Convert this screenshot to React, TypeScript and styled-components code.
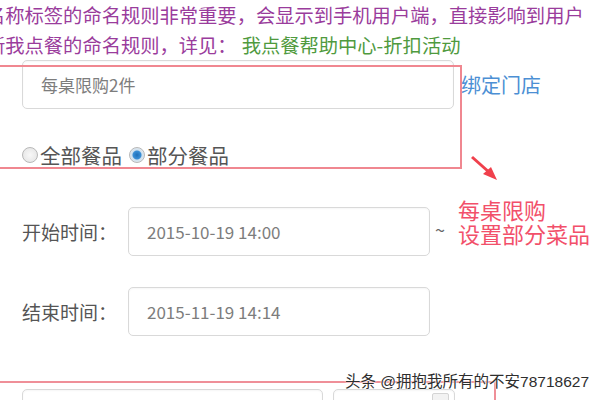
import React from 'react';
import styled, { createGlobalStyle } from 'styled-components';

const GlobalStyle = createGlobalStyle`
    html, body {
        margin: 0;
        padding: 0;
        background: #ffffff;
    }
    body {
        font-family: 'Noto Sans CJK SC', 'Noto Sans', sans-serif;
    }
`;

const Page = styled.div`
    position: relative;
    width: 600px;
    height: 400px;
    overflow: hidden;
    background: #fff;
`;

const Notice = styled.div`
    margin-left: -14px;
    font-size: 19.3px;
    line-height: 30px;
    color: #9a3c9c;
    white-space: nowrap;
`;

const HelpLink = styled.span`
    color: #4f9a3e;
    margin-left: 5px;
`;

const Row = styled.div<{ $top: number }>`
    display: flex;
    align-items: center;
    padding-left: 22px;
    margin-top: ${(p) => p.$top}px;
`;

const Field = styled.div<{ $width: number; $gap?: number }>`
    box-sizing: border-box;
    width: ${(p) => p.$width}px;
    height: 49px;
    margin-left: ${(p) => p.$gap ?? 0}px;
    padding-left: 18px;
    display: flex;
    align-items: center;
    border: 1px solid #d9d9d9;
    border-radius: 5px;
    box-shadow: inset 0 1px 2px rgba(0, 0, 0, 0.04);
    font-size: 17px;
    color: #7d7d7d;
    flex-shrink: 0;
`;

const SideLink = styled.span`
    margin-left: 7px;
    font-size: 20px;
    color: #4c8fd4;
`;

const Label = styled.span`
    width: 106px;
    font-size: 19px;
    color: #555;
`;

const Tilde = styled.span`
    margin-left: 5px;
    margin-top: -6px;
    font-size: 18px;
    color: #666;
`;

const RadioRow = styled.div`
    display: flex;
    align-items: center;
    height: 30px;
    margin-top: 31px;
    padding-left: 22px;
`;

const Radio = styled.span<{ $checked?: boolean }>`
    box-sizing: border-box;
    width: 16px;
    height: 16px;
    border-radius: 50%;
    border: 1px solid #b8b8b8;
    background: ${(p) =>
        p.$checked
            ? 'radial-gradient(circle, #1f6fb8 0, #3a8fd6 4px, #cfe0ee 5px, #f4f4f4 100%)'
            : 'radial-gradient(circle, #f8f8f8 0, #e2e2e2 100%)'};
    flex-shrink: 0;
`;

const RadioLabel = styled.span`
    margin-left: 2px;
    margin-right: 7px;
    font-size: 20.5px;
    color: #555;
`;

const SmallButton = styled.span`
    margin-left: auto;
    margin-right: 5px;
    width: 15px;
    height: 20px;
    align-self: flex-start;
    margin-top: 3px;
    border: 1px solid #d4d4d4;
    border-radius: 2px;
    background: #f2f2f2;
`;

// annotation layer drawn over the screenshot
const HighlightBox = styled.div`
    position: absolute;
    left: -10px;
    top: 65px;
    width: 472px;
    height: 104px;
    box-sizing: border-box;
    border: 2px solid #f08790;
    pointer-events: none;
`;

const BottomBox = styled.div`
    position: absolute;
    left: -10px;
    top: 381px;
    width: 506px;
    height: 40px;
    box-sizing: border-box;
    border-top: 2px solid #ef8f98;
    border-right: 2px solid #ef8f98;
`;

const Callout = styled.div`
    position: absolute;
    left: 458px;
    top: 197px;
    font-size: 22px;
    line-height: 24px;
    color: #f2506a;
    white-space: nowrap;
`;

const Arrow = styled.svg`
    position: absolute;
    left: 468px;
    top: 153px;
`;

const Watermark = styled.div`
    position: absolute;
    left: 345px;
    top: 372px;
    font-family: 'Liberation Sans', 'Noto Sans CJK SC', sans-serif;
    font-size: 15.5px;
    line-height: 20px;
    color: #2e2e2e;
    white-space: nowrap;
    text-shadow: 0 0 2px #fff, 0 0 2px #fff, 0 0 1px #fff;
`;

const App: React.FC = () => {
    return (
        <>
            <GlobalStyle />
            <Page>
                <Notice>
                    <div>名称标签的命名规则非常重要，会显示到手机用户端，直接影响到用户</div>
                    <div>
                        新我点餐的命名规则，详见：<HelpLink>我点餐帮助中心-折扣活动</HelpLink>
                    </div>
                </Notice>

                <Row $top={0}>
                    <Field $width={432}>每桌限购2件</Field>
                    <SideLink>绑定门店</SideLink>
                </Row>

                <RadioRow>
                    <Radio />
                    <RadioLabel>全部餐品</RadioLabel>
                    <Radio $checked />
                    <RadioLabel>部分餐品</RadioLabel>
                </RadioRow>

                <Row $top={37}>
                    <Label>开始时间：</Label>
                    <Field $width={302}>2015-10-19 14:00</Field>
                    <Tilde>~</Tilde>
                </Row>

                <Row $top={31}>
                    <Label>结束时间：</Label>
                    <Field $width={302}>2015-11-19 14:14</Field>
                </Row>

                <Row $top={53}>
                    <Field $width={301} />
                    <Field $width={122} $gap={10}>
                        <SmallButton />
                    </Field>
                </Row>

                <HighlightBox />
                <Arrow width="34" height="32" viewBox="0 0 34 32">
                    <line x1="4" y1="4" x2="22" y2="20" stroke="#f0404c" strokeWidth="3" />
                    <polygon points="29,27 15,21 23,14" fill="#f0404c" />
                </Arrow>
                <Callout>
                    <div>每桌限购</div>
                    <div>设置部分菜品</div>
                </Callout>
                <BottomBox />
                <Watermark>头条 @拥抱我所有的不安78718627</Watermark>
            </Page>
        </>
    );
};

export default App;
